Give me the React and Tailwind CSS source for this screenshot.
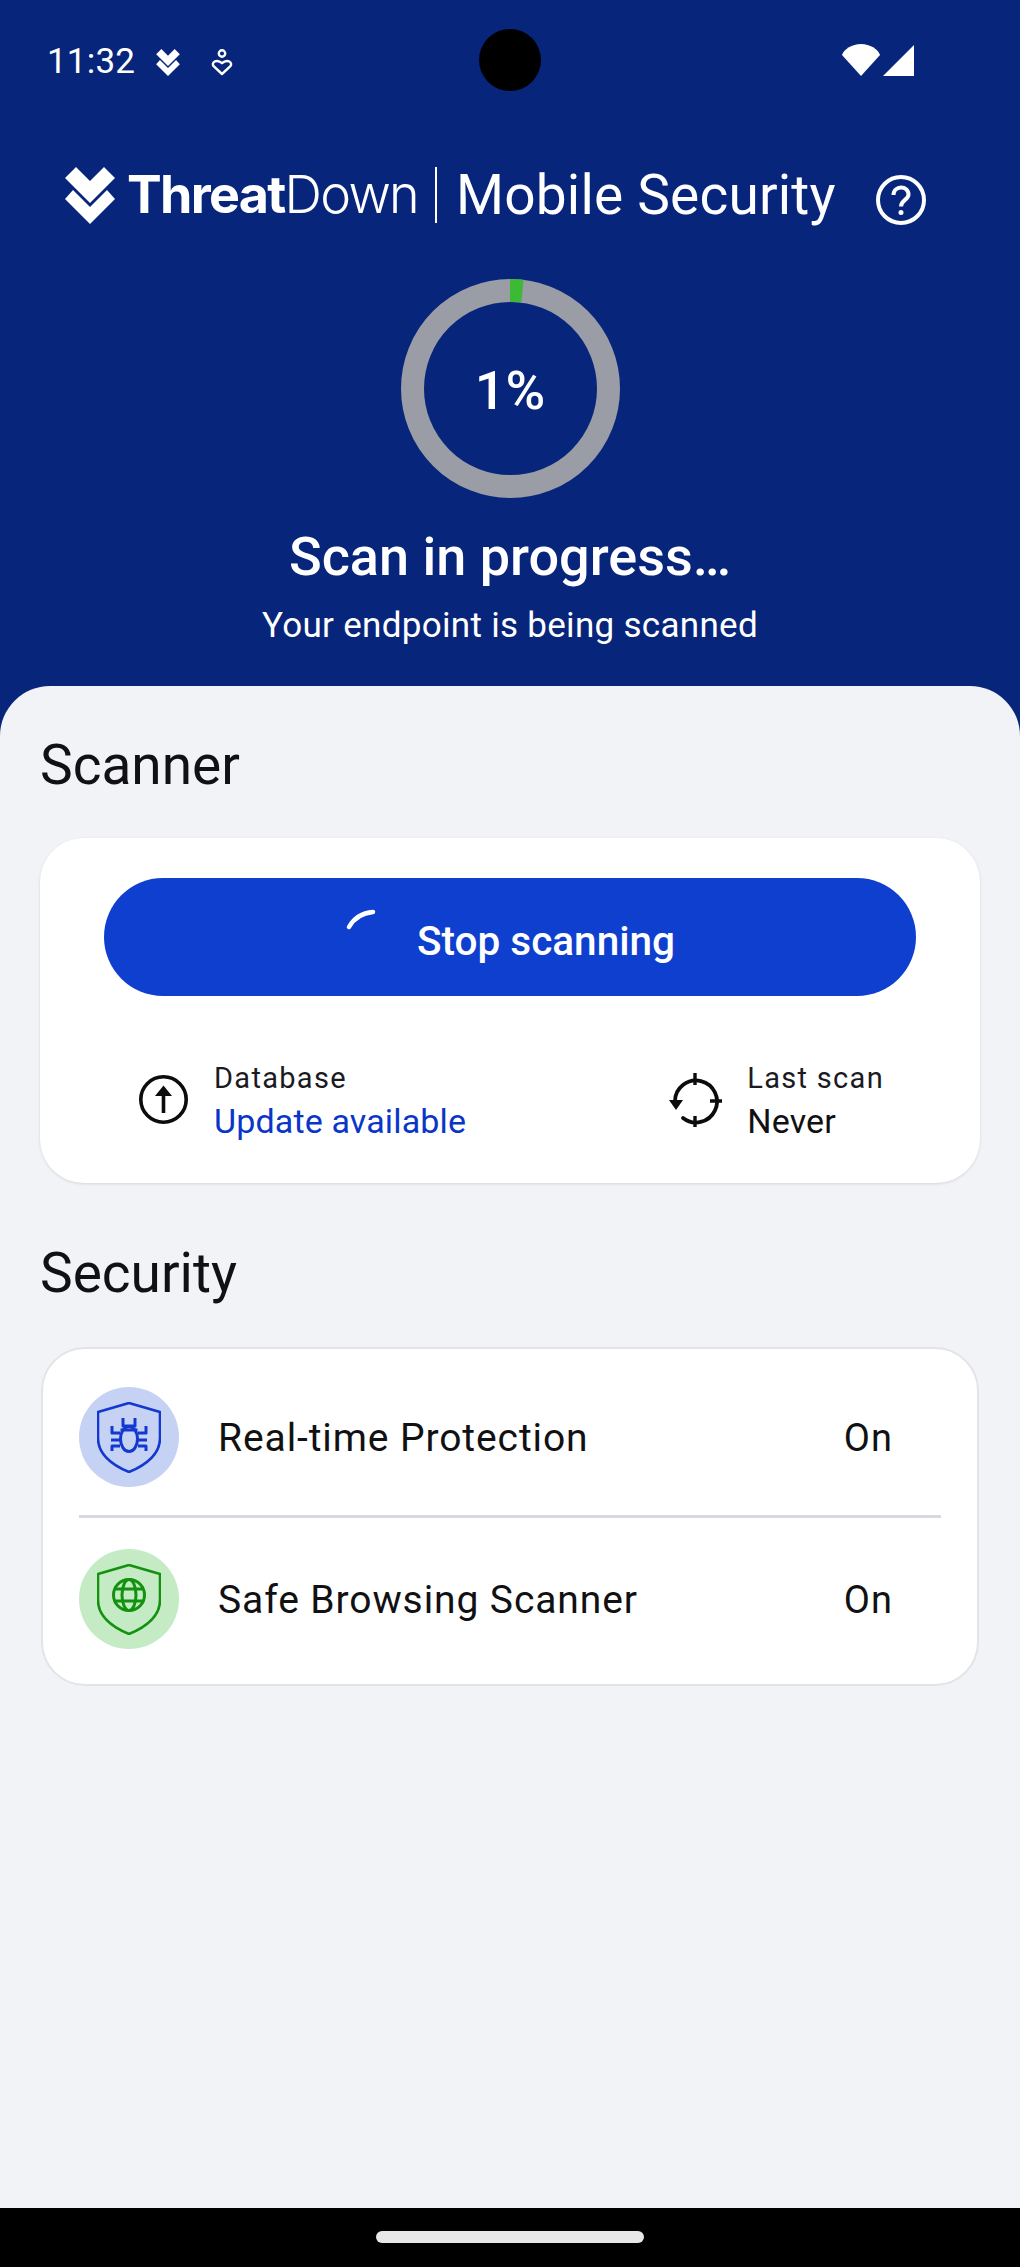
import React from 'react';

const roboto = "font-['Roboto',sans-serif]";

// ThreatDown double chevron mark
const Chevrons = ({ className }) => (
  <svg viewBox="0 0 50 57" className={className} fill="white">
    <path d="M0 11 11 0 25 14 39 0 50 11 25 36Z" />
    <path d="M0 32 8 23 25 40 42 23 50 32 25 57Z" />
  </svg>
);

const PersonHeart = () => (
  <svg viewBox="0 0 22 27" className="w-[22px] h-[27px] ml-[31px]" fill="none" stroke="white" strokeWidth="2.4">
    <circle cx="11" cy="4.5" r="3.2" />
    <path d="M11 25 2.6 17.2C-.2 13.6 5.6 9.4 11 14.2 16.4 9.4 22.2 13.6 19.4 17.2Z" strokeLinejoin="round" />
  </svg>
);

const ProgressRing = () => (
  <div className="relative w-[219px] h-[219px]">
    <svg viewBox="0 0 219 219" className="w-full h-full">
      <circle cx="109.500" cy="109.500" r="98" fill="none" stroke="#9a9ca6" strokeWidth="23" />
      <path d="M109 0 L122.500 .8 L120.500 23 L109 23 Z" fill="#3dba35" />
    </svg>
    <div className="absolute inset-0 flex items-center justify-center pt-[4px] text-white text-[54px] font-medium">1%</div>
  </div>
);

const Spinner = () => (
  <svg viewBox="0 0 32 24" className="w-[32px] h-[24px] mr-[40px] mb-[46px]" fill="none" stroke="white" strokeWidth="4.500" strokeLinecap="round">
    <path d="M4 20C9 11 17 6 28 5" />
  </svg>
);

const UpArrow = () => (
  <svg viewBox="0 0 49 49" className="w-[49px] h-[49px] shrink-0" fill="none" stroke="#0c0c0f">
    <circle cx="24.500" cy="24.500" r="22.700" strokeWidth="3.600" />
    <path d="M24.500 38V19" strokeWidth="3.600" />
    <path d="M16 21 24.500 10.500 33 21Z" fill="#0c0c0f" stroke="none" />
  </svg>
);

const Target = () => (
  <svg viewBox="0 0 53 54" className="w-[53px] h-[54px] shrink-0" fill="none" stroke="#0c0c0f" strokeWidth="3.800">
    <path d="M6 28A21 21 0 1 1 14 45" strokeLinecap="round" />
    <path d="M26 0V12M26 43V54M41 28H53" strokeWidth="3.400" />
    <path d="M0 27H14L7 37Z" fill="#0c0c0f" stroke="none" />
  </svg>
);

const ShieldBug = () => (
  <svg viewBox="0 0 64 71" className="w-[64px] h-[71px]" fill="none" stroke="#1238cf" strokeWidth="2.600" strokeLinejoin="round">
    <path d="M32 1 63 10V36C63 52 49 63 32 70C15 63 1 52 1 36V10Z" />
    <ellipse cx="32" cy="37" rx="8.500" ry="12.500" strokeWidth="3" />
    <path d="M23.500 28H40.500M26 16V24H38V16M23 31 15 31V24M23 38H14M23 44 15 44V49M41 31 49 31V24M41 38H50M41 44 49 44V49" strokeWidth="3" />
  </svg>
);

const ShieldGlobe = () => (
  <svg viewBox="0 0 64 71" className="w-[64px] h-[71px]" fill="none" stroke="#12920f" strokeWidth="2.600" strokeLinejoin="round">
    <path d="M32 1 63 10V36C63 52 49 63 32 70C15 63 1 52 1 36V10Z" />
    <circle cx="32" cy="31" r="15.500" strokeWidth="3" />
    <ellipse cx="32" cy="31" rx="7" ry="15.500" strokeWidth="3" />
    <path d="M17 25H47M17 37H47" strokeWidth="3" />
  </svg>
);

const Info = ({ icon, label, children, valueColor, gap }) => (
  <div className={`flex items-center ${gap}`}>
    {icon}
    <div className="flex flex-col">
      <span className="text-[29px] leading-[44px] tracking-[1.3px] text-[#1b1b1f]">{label}</span>
      <span className={`text-[34px] leading-[43px] tracking-[0.15px] ${valueColor}`}>{children}</span>
    </div>
  </div>
);

const Row = ({ icon, circle, label }) => (
  <div className="flex items-center h-[100px]">
    <div className={`w-[100px] h-[100px] rounded-full flex items-center justify-center ${circle}`}>{icon}</div>
    <span className="ml-[39px] pt-[2px] flex-1 text-[39px] tracking-[0.9px] text-[#111114]">{label}</span>
    <span className="mr-[48px] pt-[2px] text-[38px] tracking-[1px] text-[#111114]">On</span>
  </div>
);

export default function App() {
  return (
    <div className={`relative w-[1020px] h-[2267px] flex flex-col bg-[#07257a] ${roboto}`}>
      {/* status bar */}
      <div className="h-[160px] flex items-start justify-between pl-[47px] pr-[106px] pt-[44px] text-white">
        <div className="flex items-center">
          <span className="text-[35px] leading-[36px] tracking-[0.2px]">11:32</span>
          <Chevrons className="w-[24px] h-[27px] ml-[21px]" />
          <PersonHeart />
        </div>
        <div className="flex items-end gap-[3px]">
          <svg viewBox="0 0 38 32" className="w-[38px] h-[32px]" fill="white">
            <path d="M19 32 0 11C2 5 10 0 19 0C28 0 36 5 38 11Z" />
          </svg>
          <svg viewBox="0 0 31 31" className="w-[31px] h-[31px]" fill="white">
            <path d="M31 0V31H0Z" />
          </svg>
        </div>
      </div>
      <div className="absolute left-[479px] top-[29px] w-[62px] h-[62px] rounded-full bg-black" />

      {/* header */}
      <div className="h-[70px] flex items-center pl-[65px] text-white">
        <Chevrons className="w-[50px] h-[57px]" />
        <span className="ml-[12px] text-[52px] tracking-[-1.7px] font-['Inter',sans-serif] font-bold">Threat</span>
        <span className="text-[52px] tracking-[-1.7px] font-['Inter',sans-serif] font-light">Down</span>
        <span className="ml-[17px] w-[2px] h-[56px] bg-white" />
        <span className="ml-[19px] text-[55px] tracking-[0.2px]">Mobile Security</span>
        <svg viewBox="0 0 50 50" className="w-[50px] h-[50px] ml-[40px] mt-[10px]" fill="none" stroke="white" strokeWidth="4">
          <circle cx="25" cy="25" r="23" />
          <path d="M17.500 20C17.500 10 32.500 10 32.500 19.500C32.500 25 25 25 25 31.500" strokeWidth="4" />
          <circle cx="25" cy="37.500" r="2.500" fill="white" stroke="none" />
        </svg>
      </div>

      <div className="flex flex-col items-center mt-[49px] text-white">
        <ProgressRing />
        <div className="mt-[27px] text-[54px] leading-[64px] font-medium">Scan in progress…</div>
        <div className="mt-[15px] text-[35px] leading-[44px] tracking-[0.3px]">Your endpoint is being scanned</div>
      </div>

      {/* content sheet */}
      <div className="mt-[38px] flex-1 rounded-t-[50px] bg-[#f2f3f7] px-[40px] pt-[46px]">
        <h2 className="text-[55px] leading-[66px] text-[#111114]">Scanner</h2>
        <div className="mt-[40px] h-[345px] rounded-[44px] bg-white shadow-[0_1px_3px_rgba(0,0,0,0.12)] px-[64px] pt-[40px]">
          <button className="w-full h-[118px] pt-[9px] rounded-full bg-[#0f3fcf] flex items-center justify-center text-white text-[40.500px] font-medium">
            <Spinner />
            Stop scanning
          </button>
          <div className="mt-[60px] flex justify-between pl-[35px] pr-[32px]">
            <Info icon={<UpArrow />} label="Database" valueColor="text-[#0a36c8]" gap="gap-[26px]">Update available</Info>
            <Info icon={<Target />} label="Last scan" valueColor="text-[#111114]" gap="gap-[25px]">Never</Info>
          </div>
        </div>

        <h2 className="mt-[57px] text-[55px] leading-[66px] text-[#111114]">Security</h2>
        <div className="mt-[41px] mx-px h-[339px] rounded-[44px] bg-white border-2 border-[#e3e4e8] px-[36px] pt-[38px]">
          <Row icon={<ShieldBug />} circle="bg-[#c5d2f3]" label="Real-time Protection" />
          <div className="h-[3px] bg-[#d8d9de] mt-[28px] mb-[31px]" />
          <Row icon={<ShieldGlobe />} circle="bg-[#c5ebc4]" label="Safe Browsing Scanner" />
        </div>
      </div>

      {/* nav bar */}
      <div className="h-[59px] bg-black flex justify-center pt-[23px]">
        <div className="w-[268px] h-[12px] rounded-full bg-[#e8e8e8]" />
      </div>
    </div>
  );
}
